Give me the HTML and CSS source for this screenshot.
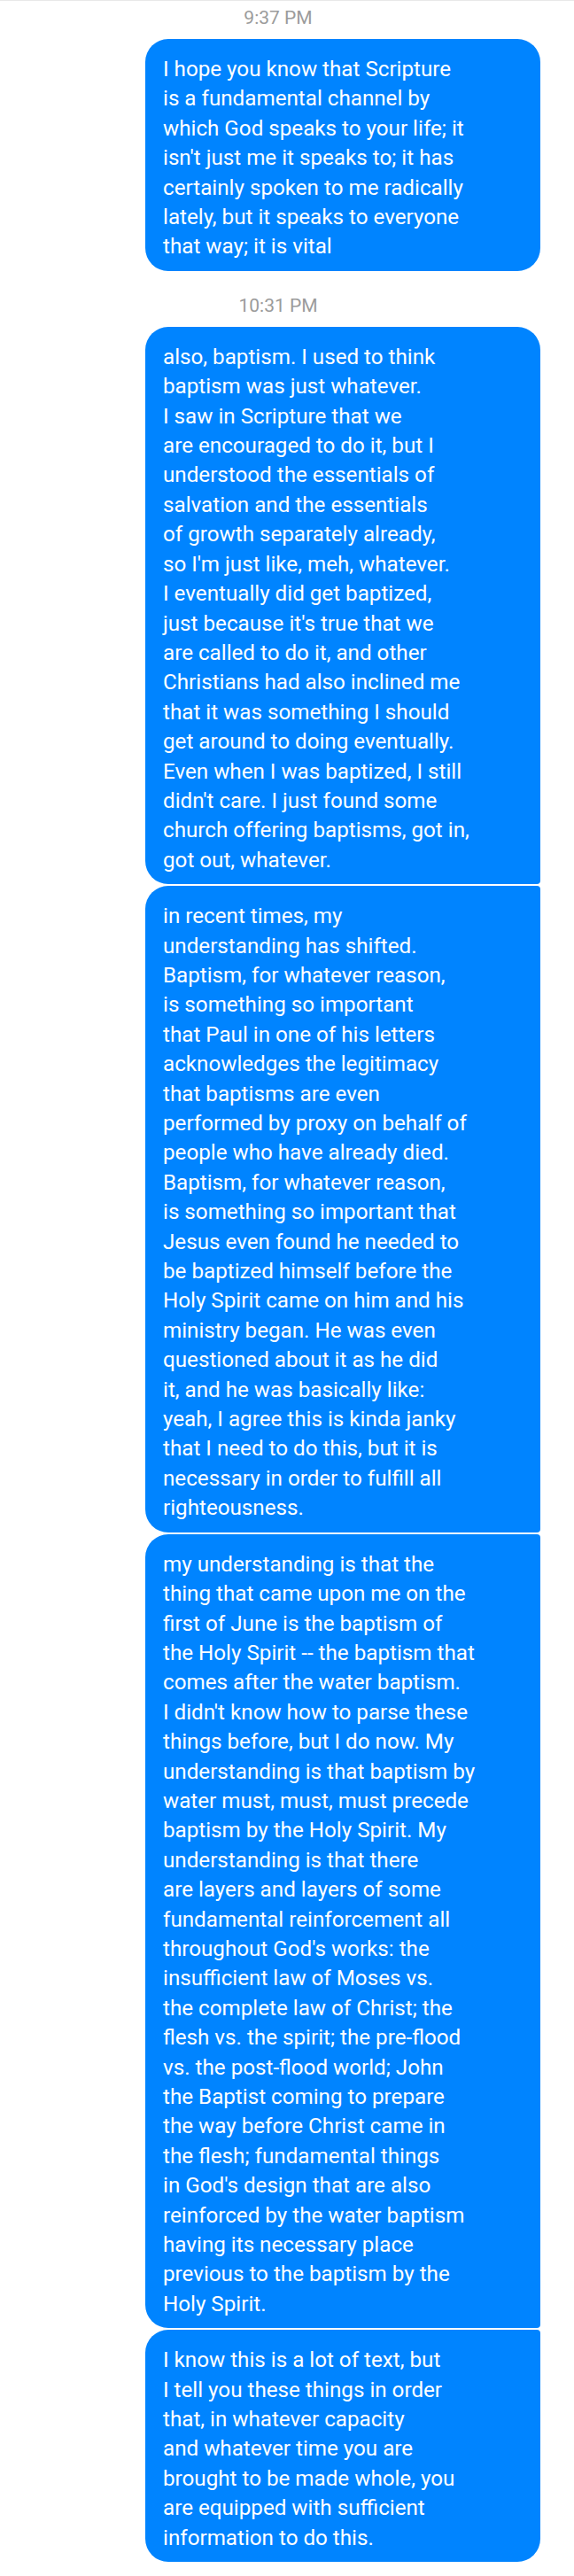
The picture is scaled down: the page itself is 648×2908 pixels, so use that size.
FILE: index.html
```html
<!DOCTYPE html>
<html lang="en">
<head>
<meta charset="utf-8">
<title>Messages</title>
<link rel="stylesheet" href="styles.css">
</head>
<body>
<div class="thread">
  <div class="time">9:37 PM</div>
  <div class="group">
    <div class="bubble single">I hope you know that Scripture<br>is a fundamental channel by<br>which God speaks to your life; it<br>isn't just me it speaks to; it has<br>certainly spoken to me radically<br>lately, but it speaks to everyone<br>that way; it is vital</div>
  </div>

  <div class="time">10:31 PM</div>
  <div class="group">
    <div class="bubble first">also, baptism. I used to think<br>baptism was just whatever.<br>I saw in Scripture that we<br>are encouraged to do it, but I<br>understood the essentials of<br>salvation and the essentials<br>of growth separately already,<br>so I'm just like, meh, whatever.<br>I eventually did get baptized,<br>just because it's true that we<br>are called to do it, and other<br>Christians had also inclined me<br>that it was something I should<br>get around to doing eventually.<br>Even when I was baptized, I still<br>didn't care. I just found some<br>church offering baptisms, got in,<br>got out, whatever.</div>
    <div class="bubble middle">in recent times, my<br>understanding has shifted.<br>Baptism, for whatever reason,<br>is something so important<br>that Paul in one of his letters<br>acknowledges the legitimacy<br>that baptisms are even<br>performed by proxy on behalf of<br>people who have already died.<br>Baptism, for whatever reason,<br>is something so important that<br>Jesus even found he needed to<br>be baptized himself before the<br>Holy Spirit came on him and his<br>ministry began. He was even<br>questioned about it as he did<br>it, and he was basically like:<br>yeah, I agree this is kinda janky<br>that I need to do this, but it is<br>necessary in order to fulfill all<br>righteousness.</div>
    <div class="bubble middle">my understanding is that the<br>thing that came upon me on the<br>first of June is the baptism of<br>the Holy Spirit -- the baptism that<br>comes after the water baptism.<br>I didn't know how to parse these<br>things before, but I do now. My<br>understanding is that baptism by<br>water must, must, must precede<br>baptism by the Holy Spirit. My<br>understanding is that there<br>are layers and layers of some<br>fundamental reinforcement all<br>throughout God's works: the<br>insufficient law of Moses vs.<br>the complete law of Christ; the<br>flesh vs. the spirit; the pre-flood<br>vs. the post-flood world; John<br>the Baptist coming to prepare<br>the way before Christ came in<br>the flesh; fundamental things<br>in God's design that are also<br>reinforced by the water baptism<br>having its necessary place<br>previous to the baptism by the<br>Holy Spirit.</div>
    <div class="bubble last">I know this is a lot of text, but<br>I tell you these things in order<br>that, in whatever capacity<br>and whatever time you are<br>brought to be made whole, you<br>are equipped with sufficient<br>information to do this.</div>
  </div>
</div>
</body>
</html>
```

FILE: styles.css
```css
html, body {
  margin: 0;
  padding: 0;
  background: #ffffff;
}

body {
  border-top: 1px solid #e8e8e8;
  font-family: Roboto, "Noto Sans", Arial, sans-serif;
}

.thread {
  display: flex;
  flex-direction: column;
}

.time {
  text-align: center;
  padding-right: 20px;
  color: #9b9b9b;
  font-size: 21px;
  line-height: 24px;
  height: 24px;
  margin: 7px 0 12px;
}

.group {
  display: flex;
  flex-direction: column;
  gap: 2px;
  margin-bottom: 20px;
}

.bubble {
  box-sizing: border-box;
  width: 446px;
  align-self: flex-end;
  margin-right: 38px;
  background: #0084ff;
  color: #ffffff;
  font-size: 24.2px;
  line-height: 33.4px;
  padding: 18px 10px 10px 20px;
  white-space: nowrap;
}

.single {
  border-radius: 26px;
}

.first {
  border-radius: 26px 26px 4px 26px;
}

.middle {
  border-radius: 26px 4px 4px 26px;
}

.last {
  border-radius: 26px 4px 26px 26px;
}
```
